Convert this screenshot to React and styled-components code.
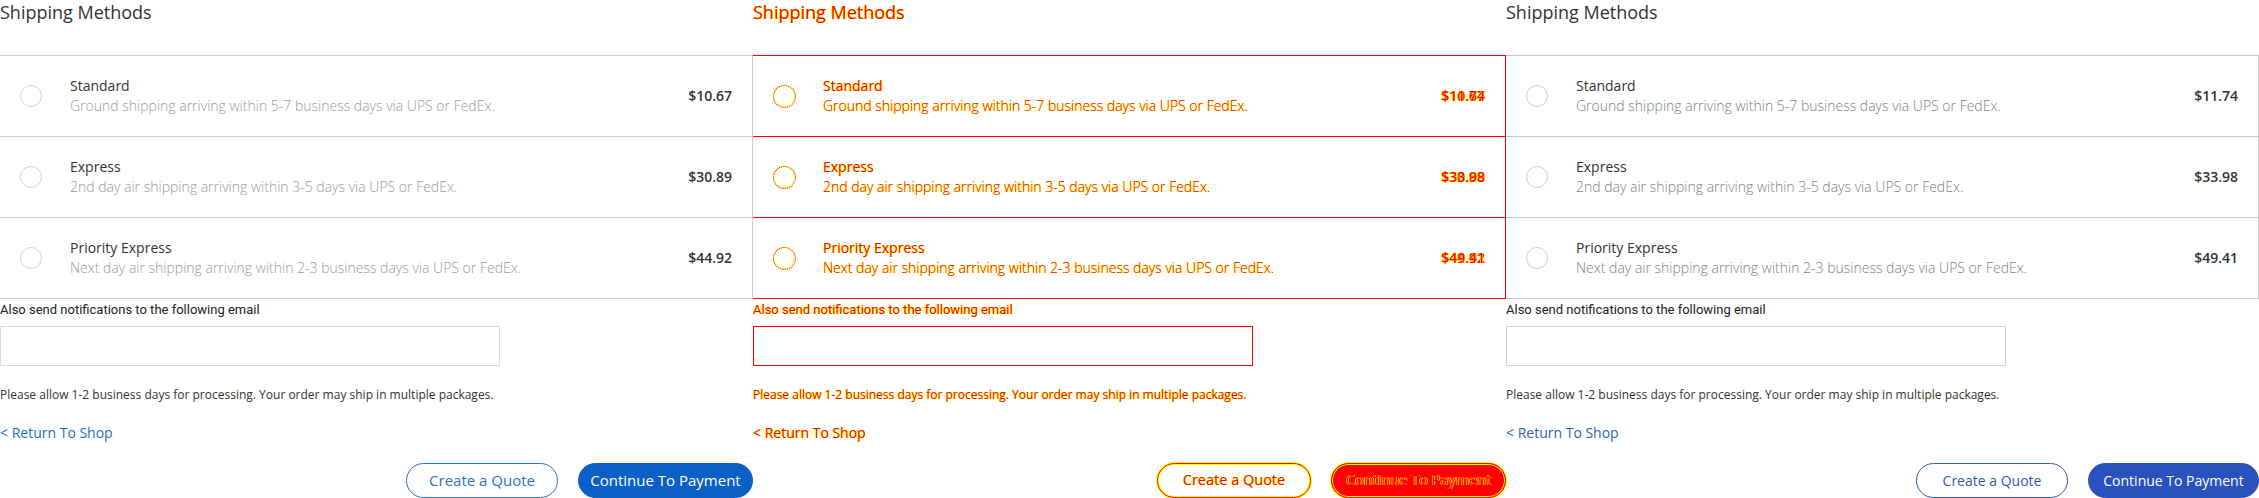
import React from 'react';
import styled, { createGlobalStyle, css } from 'styled-components';

const Global = createGlobalStyle`
  html, body { margin: 0; padding: 0; background: #fff; }
  body { font-family: "Open Sans", sans-serif; overflow: hidden; }
  * { box-sizing: border-box; }
`;

const P = {
  a: { text: '#333', border: '#cfcfcf', desc: '#9b9b9b', radio: '#d2d2d2', link: '#1a6ec6', outline: '#2a73c8', primary: '#0b60c8', label: '#222', input: '#d9d9d9', btnSize: '15px' },
  b: { text: '#333', border: '#c8c8c8', desc: '#7f7f7f', radio: '#cdcdcd', link: '#2d5fb8', outline: '#3158b9', primary: '#2a52be', label: '#222', input: '#d2d2d2', btnSize: '14px' },
  diff: { text: '#f00', border: '#f00', desc: '#f00', radio: '#f00', link: '#f00', outline: '#f00', primary: '#f00', label: '#f00', input: '#f00', btnSize: '14.5px' },
};

const pal = (k) => ({ $v }) => P[$v][k];

const glow = css`
  ${({ $v }) =>
    $v === 'diff' &&
    css`
      color: #ff0000;
      text-shadow: 0.6px 0.4px 0 #ffff00, -0.6px -0.4px 0 #ffff00;
    `}
`;

const Page = styled.main`
  display: grid;
  grid-template-columns: repeat(3, 753px);
  height: 498px;
  overflow: hidden;
`;

const Column = styled.section`
  display: flex;
  flex-direction: column;
  min-width: 0;
`;

const Heading = styled.h2`
  margin: 0 0 31px;
  font: 400 18px/24px "Open Sans", sans-serif;
  color: ${pal('text')};
  ${glow}
`;

const Table = styled.div`
  border-top: 1px solid ${pal('border')};
  border-right: 1px solid ${pal('border')};
`;

const Row = styled.label`
  display: flex;
  align-items: center;
  height: 81px;
  padding: 0 20px;
  border-bottom: 1px solid ${pal('border')};
`;

const Radio = styled.span`
  position: relative;
  flex: none;
  width: 22px;
  height: 22px;
  margin-right: 28px;
  border-radius: 50%;
  border: 1px solid ${pal('radio')};
  ${({ $v }) =>
    $v === 'diff' &&
    css`
      border: 1.5px solid #ffff00;
      &::after {
        content: '';
        position: absolute;
        inset: -1.5px;
        border-radius: 50%;
        border: 1.5px dotted #ff0000;
      }
    `}
`;

const Info = styled.div`
  flex: 1;
  display: flex;
  flex-direction: column;
`;

const Title = styled.span`
  font: 400 14px/20px "Open Sans", sans-serif;
  color: ${pal('text')};
  ${glow}
`;

const Desc = styled.span`
  font: 300 14px/20px "Open Sans", sans-serif;
  color: ${pal('desc')};
  ${glow}
`;

const Price = styled.span`
  position: relative;
  font: 600 14px/20px "Open Sans", sans-serif;
  color: ${pal('text')};
  ${glow}
`;

const PriceGhost = styled.span`
  position: absolute;
  right: 0;
  top: 0;
`;

const Label = styled.div`
  margin-top: 3px;
  font: 400 13px/16px Roboto, "Liberation Sans", sans-serif;
  color: ${pal('label')};
  ${glow}
`;

const EmailInput = styled.input`
  margin-top: 8px;
  width: 500px;
  height: 40px;
  border: 1px solid ${pal('input')};
  border-radius: 0;
  outline: none;
  background: #fff;
`;

const Note = styled.p`
  margin: 20px 0 0;
  font: 400 12px/18px "Open Sans", sans-serif;
  color: ${pal('text')};
  ${glow}
`;

const BackLink = styled.a`
  display: block;
  margin-top: 19px;
  font: 400 14px/20px "Open Sans", sans-serif;
  color: ${pal('link')};
  text-decoration: none;
  ${glow}
`;

const Actions = styled.div`
  display: flex;
  justify-content: flex-end;
  gap: 20px;
  margin-top: 20px;
`;

const Button = styled.button`
  flex: none;
  width: ${({ $w }) => $w}px;
  height: 35px;
  padding: 0;
  border-radius: 18px;
  font: 400 ${pal('btnSize')}/1 "Open Sans", sans-serif;
  cursor: pointer;
  ${({ $primary, $v }) =>
    $primary
      ? css`
          background: ${P[$v].primary};
          border: 1px solid ${P[$v].primary};
          color: #fff;
        `
      : css`
          background: #fff;
          border: 1px solid ${P[$v].outline};
          color: ${P[$v].outline};
        `}
  ${({ $v }) =>
    $v === 'diff' &&
    css`
      box-shadow: 0 0 0 1px #ffff00, inset 0 0 0 1px #ffff00;
    `}
  ${glow}
`;

const METHODS = [
  { name: 'Standard', desc: 'Ground shipping arriving within 5-7 business days via UPS or FedEx.', a: '$10.67', b: '$11.74' },
  { name: 'Express', desc: '2nd day air shipping arriving within 3-5 days via UPS or FedEx.', a: '$30.89', b: '$33.98' },
  { name: 'Priority Express', desc: 'Next day air shipping arriving within 2-3 business days via UPS or FedEx.', a: '$44.92', b: '$49.41' },
];

const BTN_W = {
  a: [152, 175],
  diff: [154, 175],
  b: [152, 171],
};

function Checkout({ v }) {
  return (
    <Column>
      <Heading $v={v}>Shipping Methods</Heading>
      <Table $v={v}>
        {METHODS.map((m) => (
          <Row key={m.name} $v={v}>
            <Radio $v={v} />
            <Info>
              <Title $v={v}>{m.name}</Title>
              <Desc $v={v}>{m.desc}</Desc>
            </Info>
            <Price $v={v}>
              {v === 'b' ? m.b : m.a}
              {v === 'diff' && <PriceGhost>{m.b}</PriceGhost>}
            </Price>
          </Row>
        ))}
      </Table>
      <Label $v={v}>Also send notifications to the following email</Label>
      <EmailInput $v={v} type="email" />
      <Note $v={v}>Please allow 1-2 business days for processing. Your order may ship in multiple packages.</Note>
      <BackLink $v={v} href="#">&lt; Return To Shop</BackLink>
      <Actions>
        <Button $v={v} $w={BTN_W[v][0]}>Create a Quote</Button>
        <Button $v={v} $w={BTN_W[v][1]} $primary>Continue To Payment</Button>
      </Actions>
    </Column>
  );
}

export default function App() {
  return (
    <>
      <Global />
      <Page>
        <Checkout v="a" />
        <Checkout v="diff" />
        <Checkout v="b" />
      </Page>
    </>
  );
}
